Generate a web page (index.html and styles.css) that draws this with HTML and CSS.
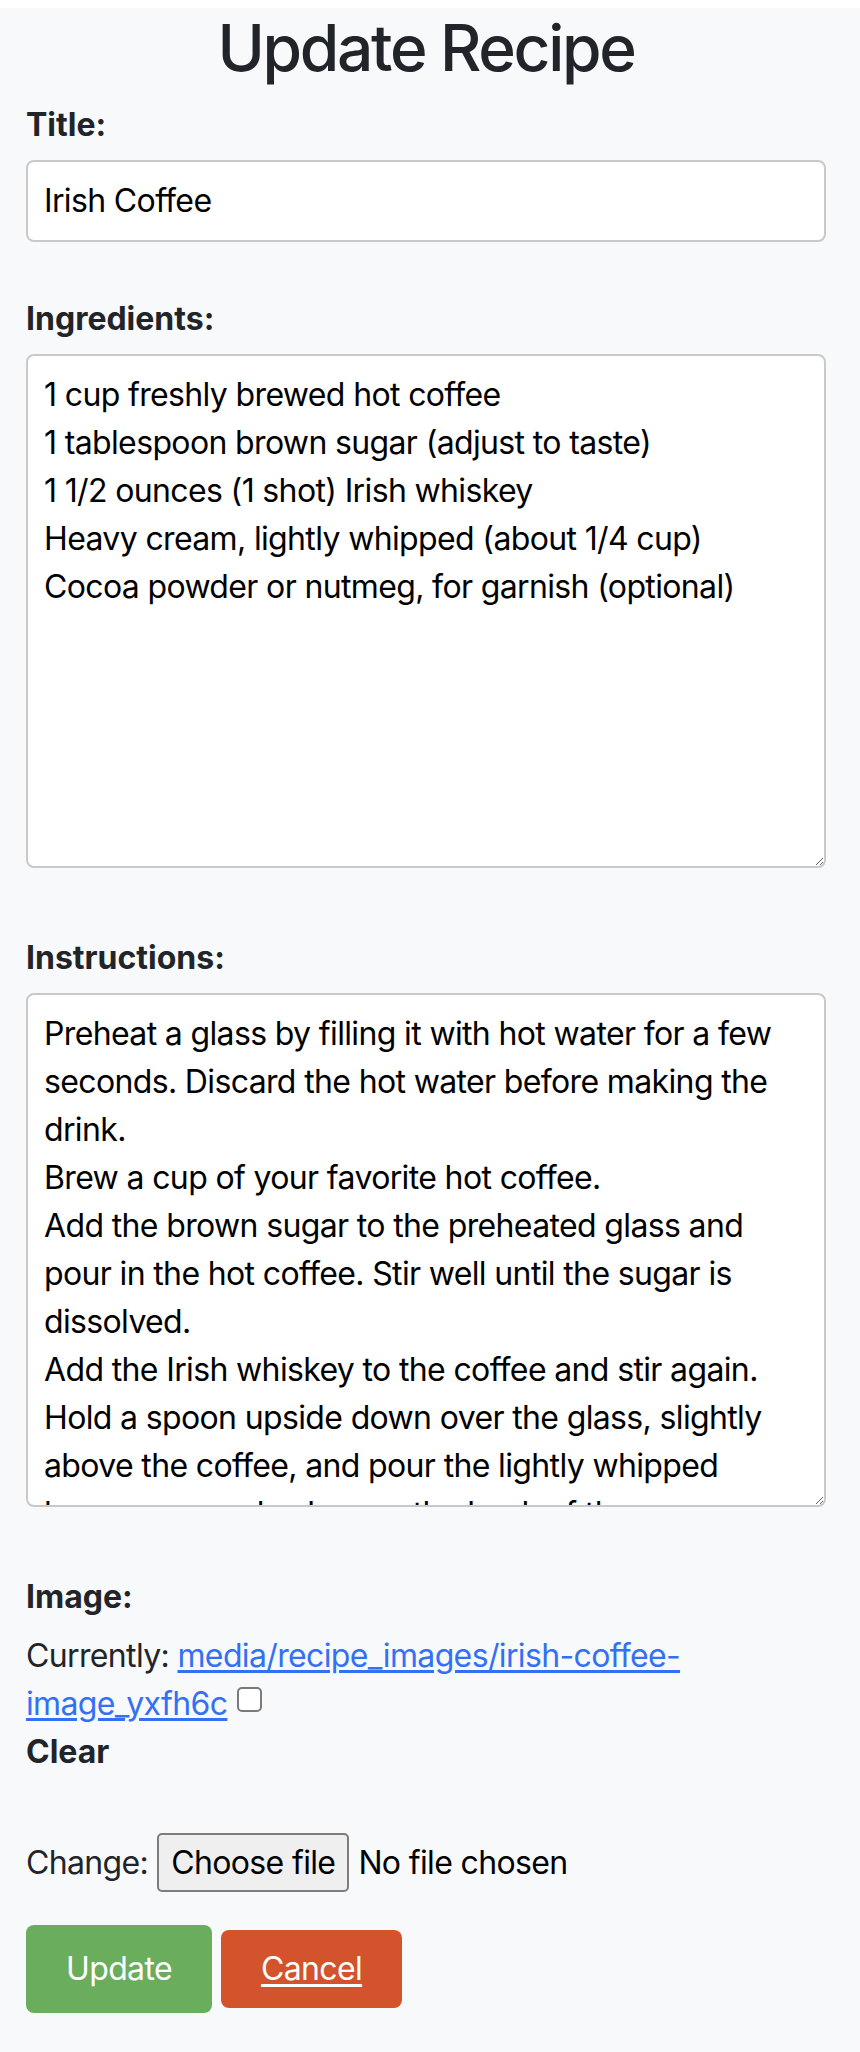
FILE: index.html
```html
<!DOCTYPE html>
<html lang="en">
<head>
<meta charset="utf-8">
<title>Update Recipe</title>
<link rel="stylesheet" href="styles.css">
</head>
<body>
<div class="page">
  <h1 class="page-title">Update Recipe</h1>
  <form class="recipe-form">
    <div class="field field-input">
      <label class="field-label" for="id_title">Title:</label>
      <input class="control" id="id_title" type="text" value="Irish Coffee">
    </div>
    <div class="field field-area">
      <label class="field-label" for="id_ingredients">Ingredients:</label>
      <textarea class="control control-area" id="id_ingredients" rows="10">1 cup freshly brewed hot coffee
1 tablespoon brown sugar (adjust to taste)
1 1/2 ounces (1 shot) Irish whiskey
Heavy cream, lightly whipped (about 1/4 cup)
Cocoa powder or nutmeg, for garnish (optional)</textarea>
    </div>
    <div class="field field-area">
      <label class="field-label" for="id_instructions">Instructions:</label>
      <textarea class="control control-area" id="id_instructions" rows="10">Preheat a glass by filling it with hot water for a few seconds. Discard the hot water before making the drink.
Brew a cup of your favorite hot coffee.
Add the brown sugar to the preheated glass and pour in the hot coffee. Stir well until the sugar is dissolved.
Add the Irish whiskey to the coffee and stir again.
Hold a spoon upside down over the glass, slightly above the coffee, and pour the lightly whipped heavy cream slowly over the back of the spoon. This will help the cream float on top of the coffee.
Garnish with a sprinkle of cocoa powder or nutmeg, if desired.
Serve immediately and enjoy!</textarea>
    </div>
    <div class="field field-image">
      <label class="field-label" for="id_image">Image:</label>
      <div class="current">Currently: <a class="current-link" href="#">media/recipe_images/irish-coffee-image_yxfh6c</a> <input class="clear-box" type="checkbox" id="image-clear_id"><br><label class="clear-label" for="image-clear_id">Clear</label></div>
      <div class="change">
        <span class="change-text">Change:</span>
        <label class="file-btn" for="id_image">Choose file</label>
        <span class="file-status">No file chosen</span>
        <input class="file-input" type="file" id="id_image">
      </div>
    </div>
    <div class="actions">
      <button class="btn btn-update" type="submit">Update</button>
      <a class="btn btn-cancel" href="#">Cancel</a>
    </div>
  </form>
</div>
</body>
</html>
```

FILE: styles.css
```css
html {
  background: #ffffff;
}

body {
  margin: 0;
  font-family: Inter, "Noto Sans", "Liberation Sans", sans-serif;
  font-size: 32px;
  line-height: 48px;
  letter-spacing: -0.02em;
  color: #212529;
}

.page {
  margin-top: 8px;
  min-height: 2044px;
  background: #f8f9fa;
  padding: 2px 0 0 26px;
  box-sizing: border-box;
}

.page-title {
  width: 800px;
  margin: 0;
  font-size: 64px;
  line-height: 76px;
  font-weight: 500;
  text-align: center;
  letter-spacing: -2.3px;
}

.recipe-form {
  width: 800px;
  margin-top: 15px;
}

.field-label {
  display: block;
  font-weight: 700;
  letter-spacing: 0;
  margin-bottom: 11px;
}

.field-input {
  margin-bottom: 53px;
}

.field-area {
  margin-bottom: 66px;
}

.control {
  display: block;
  width: 800px;
  box-sizing: border-box;
  margin: 0;
  border: 2px solid #c9c9c9;
  border-radius: 8px;
  background: #ffffff;
  padding: 15px 16px;
  font-family: inherit;
  font-size: 32px;
  line-height: 48px;
  letter-spacing: -0.02em;
  color: #000000;
  outline: none;
}

.control-area {
  height: 514px;
  resize: vertical;
  overflow: hidden;
}

.current {
  line-height: 48px;
}

.current-link {
  color: #3370f5;
  text-decoration: underline;
  text-underline-offset: 3px;
}

.clear-box {
  -webkit-appearance: none;
  appearance: none;
  display: inline-block;
  width: 25px;
  height: 25px;
  margin: 0 0 0 1px;
  box-sizing: border-box;
  border: 2px solid #7a7a7a;
  border-radius: 5px;
  background: #ffffff;
  vertical-align: 3px;
}

.clear-label {
  display: block;
  font-weight: 700;
  letter-spacing: 0;
}

.change {
  display: flex;
  align-items: center;
  gap: 9px;
  margin-top: 57px;
}

.file-btn {
  display: block;
  box-sizing: border-box;
  height: 59px;
  padding: 0 12px;
  line-height: 55px;
  background: #efefef;
  border: 2px solid #7d7d7d;
  border-radius: 5px;
  color: #000000;
}

.file-status {
  color: #000000;
}

.file-input {
  display: none;
}

.actions {
  display: flex;
  align-items: center;
  gap: 9px;
  margin-top: 33px;
}

.btn {
  display: block;
  font-family: inherit;
  font-size: 32px;
  line-height: 48px;
  letter-spacing: -0.02em;
  color: #ffffff;
  border: 0;
  border-radius: 8px;
  margin: 0;
}

.btn-update {
  background: #6aad5c;
  padding: 20px 40px;
}

.btn-cancel {
  background: #d3532c;
  padding: 15px 40px;
  text-decoration: underline;
  text-underline-offset: 4px;
}
```
